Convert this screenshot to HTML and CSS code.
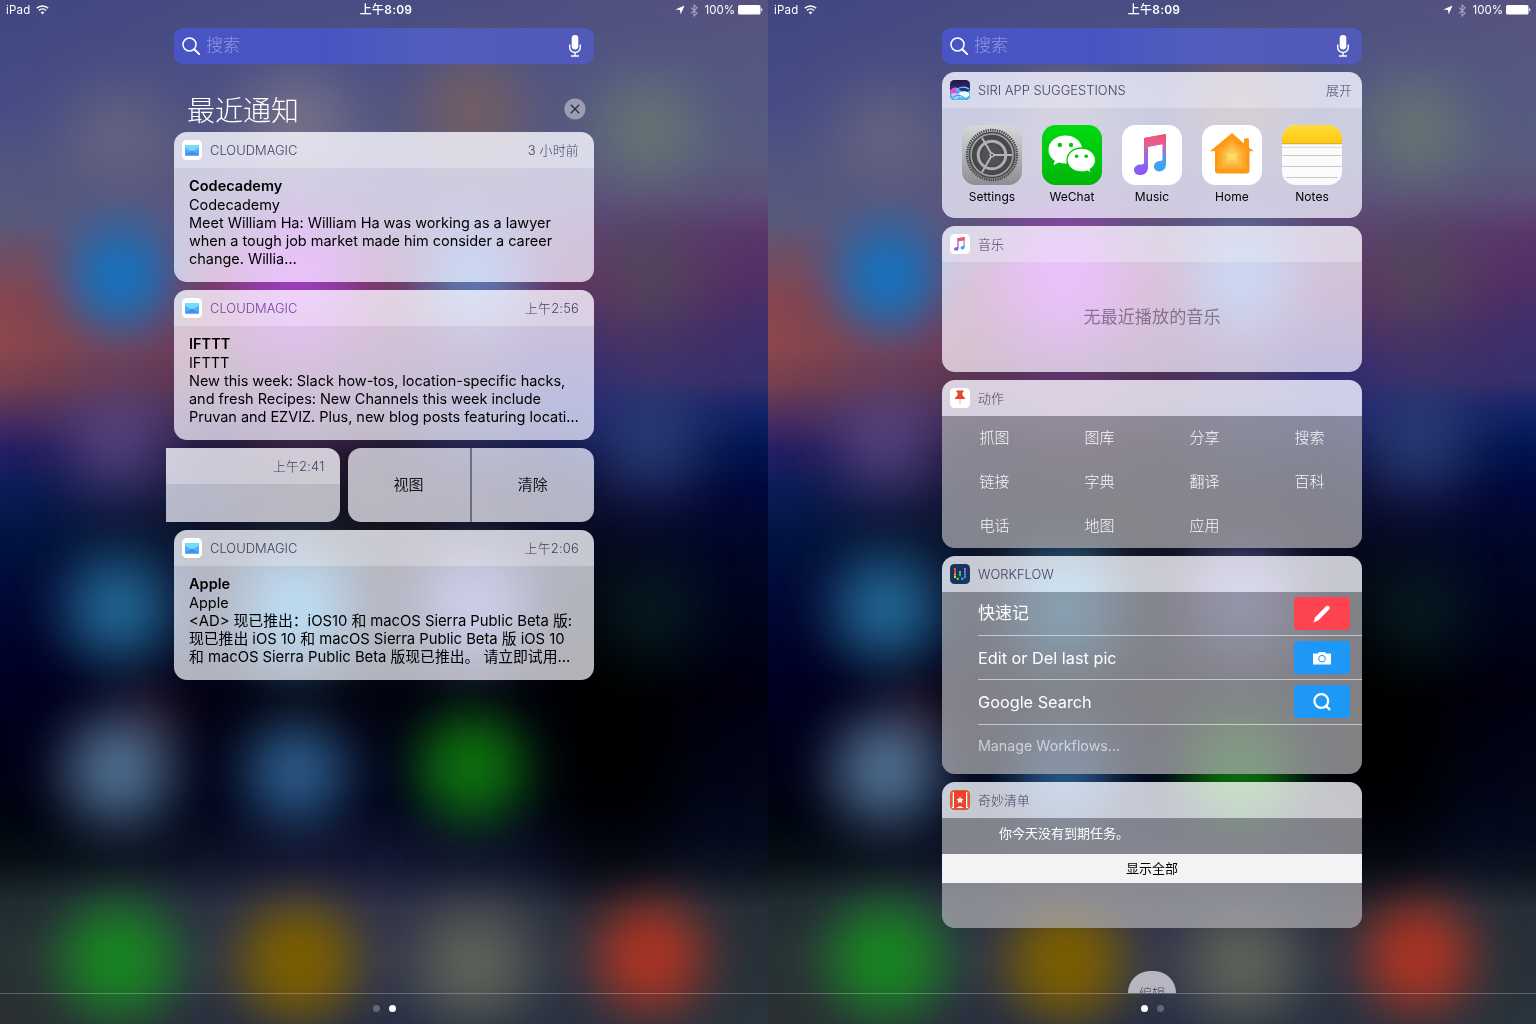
FILE: index.html
```html
<!DOCTYPE html>
<html lang="zh-CN">
<head>
<meta charset="utf-8">
<title>通知与小组件</title>
<link rel="stylesheet" href="styles.css">
</head>
<body>
<svg class="defs" width="0" height="0">
  <defs>
    <linearGradient id="g-mail" x1="0" y1="0" x2="0" y2="1"><stop offset="0" stop-color="#5fd0fa"/><stop offset="1" stop-color="#4a97f2"/></linearGradient>
    <linearGradient id="g-note" x1="0" y1="0" x2="0" y2="1"><stop offset="0" stop-color="#fb4f6c"/><stop offset=".3" stop-color="#e0609a"/><stop offset=".62" stop-color="#8a6cf5"/><stop offset="1" stop-color="#8a55f7"/></linearGradient>
    <linearGradient id="g-note2" x1="0" y1="0" x2="0" y2="1"><stop offset="0" stop-color="#fb4f6c"/><stop offset=".3" stop-color="#e0609a"/><stop offset=".65" stop-color="#4f98f0"/><stop offset="1" stop-color="#35aaf8"/></linearGradient>
    <linearGradient id="g-set" x1="0" y1="0" x2="0" y2="1"><stop offset="0" stop-color="#d6d7d8"/><stop offset="1" stop-color="#8d8e92"/></linearGradient>
    <linearGradient id="g-wc" x1="0" y1="0" x2="0" y2="1"><stop offset="0" stop-color="#00da12"/><stop offset="1" stop-color="#00b50b"/></linearGradient>
    <linearGradient id="g-nt" x1="0" y1="0" x2="0" y2="1"><stop offset="0" stop-color="#ffdb3f"/><stop offset="1" stop-color="#fdc80a"/></linearGradient>
    <linearGradient id="g-siri" x1="0" y1="0" x2="0" y2="1"><stop offset="0" stop-color="#1b1840"/><stop offset=".5" stop-color="#3a2a80"/><stop offset="1" stop-color="#2c70b8"/></linearGradient>
    <symbol id="i-mail" viewBox="0 0 20 20"><rect width="20" height="20" rx="4.500" fill="#fff"/><rect x="3" y="5" width="14" height="10.500" rx=".8" fill="url(#g-mail)"/><path d="M3 5h14v2L10 12 3 7z" fill="#74dcf8"/><path d="M3 15.500l7-5 7 5z" fill="#4a8df0"/></symbol>
    <symbol id="i-note" viewBox="0 0 60 60"><path d="M22 13l22-4v9.500l-18 3.500v20c0 5-3 8-7.500 8-4 0-6.500-2-6.500-5 0-3.500 3-5.500 7-5.500 1.800 0 3-.4 3-2z" fill="url(#g-note)"/><path d="M22 13l22-4v30c0 4.800-3 7.400-6.800 7.400-3.200 0-5.200-2-5.200-4.800 0-3.200 2.600-5.400 6-5.600 1.700-.1 2.500-.6 2.500-2V19L22 22.500z" fill="url(#g-note2)"/></symbol>
    <symbol id="i-search" viewBox="0 0 18 18"><circle cx="7.500" cy="7.500" r="6.500" fill="none" stroke="currentColor" stroke-width="1.500"/><path d="M12.200 12.200l5 4.900" stroke="currentColor" stroke-width="2" stroke-linecap="round"/></symbol>
    <symbol id="i-mic" viewBox="0 0 12 22"><rect x="2.700" y="0" width="6.600" height="14.500" rx="3.300" fill="#fff"/><path d="M.7 9.500v2.700a5.300 5.300 0 0 0 10.600 0V9.500M6 17.500v3M2 21h8" fill="none" stroke="#fff" stroke-width="1.400"/></symbol>
    <symbol id="i-wifi" viewBox="0 0 13 10"><path d="M6.500 9.500L4.600 7.300a2.800 2.800 0 0 1 3.800 0z" fill="#fff"/><path d="M2.900 5.500a5.200 5.200 0 0 1 7.200 0M.8 3.200a8.200 8.200 0 0 1 11.400 0" fill="none" stroke="#fff" stroke-width="1.500"/></symbol>
    <symbol id="i-loc" viewBox="0 0 10 10"><path d="M9.500.5L5.700 9.500 5 5 .5 4.400z" fill="#fff"/></symbol>
    <symbol id="i-bt" viewBox="0 0 8 13"><path d="M1 3.700l6 5.600-3 2.700V1l3 2.700-6 5.600" fill="none" stroke="#a3a4c4" stroke-width="1.100"/></symbol>
    <symbol id="i-bat" viewBox="0 0 25 10"><rect x="0" y="0" width="22.500" height="9.500" rx="1.600" fill="#fff"/><path d="M23.200 3c1.700.6 1.700 3 0 3.600z" fill="#fff"/></symbol>
  </defs>
</svg>

<main class="screens">
  <section class="screen">
    <div class="wallpaper"><div class="glow"></div></div>
    <div class="content">
      <header class="status">
        <div class="status-side"><span>iPad</span><svg class="wifi"><use href="#i-wifi"/></svg></div>
        <div class="clock">上午<b>8:09</b></div>
        <div class="status-side end"><svg class="loc"><use href="#i-loc"/></svg><svg class="bt"><use href="#i-bt"/></svg><span>100%</span><svg class="bat"><use href="#i-bat"/></svg></div>
      </header>
      <div class="column">
        <div class="search"><svg class="glass"><use href="#i-search"/></svg><span>搜索</span><svg class="mic"><use href="#i-mic"/></svg></div>
        <div class="heading"><h1>最近通知</h1><svg class="close" viewBox="0 0 22 22"><circle cx="11" cy="11" r="10.600" fill="#9c9cb2"/><path d="M6.800 6.800l8.400 8.400M15.200 6.800l-8.400 8.400" stroke="#2c2c48" stroke-width="1.300"/></svg></div>

        <article class="card note">
          <div class="card-head"><svg class="app"><use href="#i-mail"/></svg><span class="app-name">CLOUDMAGIC</span><time>3 小时前</time></div>
          <div class="card-body"><strong>Codecademy</strong><p class="sub">Codecademy</p><p>Meet William Ha: William Ha was working as a lawyer<br>when a tough job market made him consider a career<br>change. Willia…</p></div>
        </article>
        <article class="card note">
          <div class="card-head"><svg class="app"><use href="#i-mail"/></svg><span class="app-name plum">CLOUDMAGIC</span><time>上午2:56</time></div>
          <div class="card-body"><strong>IFTTT</strong><p class="sub">IFTTT</p><p>New this week: Slack how-tos, location-specific hacks,<br>and fresh Recipes: New Channels this week include<br>Pruvan and EZVIZ. Plus, new blog posts featuring locati…</p></div>
        </article>
        <div class="swiped">
          <article class="card slid"><div class="card-head"><time>上午2:41</time></div></article>
          <div class="card actions"><button>视图</button><button>清除</button></div>
        </div>
        <article class="card note">
          <div class="card-head"><svg class="app"><use href="#i-mail"/></svg><span class="app-name">CLOUDMAGIC</span><time>上午2:06</time></div>
          <div class="card-body"><strong>Apple</strong><p class="sub">Apple</p><p class="zh">&lt;AD&gt; 现已推出：iOS10 和 macOS Sierra Public Beta 版:<br>现已推出 iOS 10 和 macOS Sierra Public Beta 版 iOS 10<br>和 macOS Sierra Public Beta 版现已推出。 请立即试用…</p></div>
        </article>
      </div>
      <footer class="pager"><i></i><i class="on"></i></footer>
    </div>
  </section>

  <section class="screen">
    <div class="wallpaper"><div class="glow"></div></div>
    <div class="content">
      <header class="status">
        <div class="status-side"><span>iPad</span><svg class="wifi"><use href="#i-wifi"/></svg></div>
        <div class="clock">上午<b>8:09</b></div>
        <div class="status-side end"><svg class="loc"><use href="#i-loc"/></svg><svg class="bt"><use href="#i-bt"/></svg><span>100%</span><svg class="bat"><use href="#i-bat"/></svg></div>
      </header>
      <div class="column">
        <div class="search"><svg class="glass"><use href="#i-search"/></svg><span>搜索</span><svg class="mic"><use href="#i-mic"/></svg></div>

        <article class="card siri">
          <div class="card-head">
            <svg class="app" viewBox="0 0 20 20"><rect width="20" height="20" rx="4.500" fill="url(#g-siri)"/><path d="M0 11c4-5 7-4 10-1s7 3 10 0v5.500a4.500 4.500 0 0 1-4.500 4.500h-11A4.500 4.500 0 0 1 0 15.500z" fill="#49b8ee"/><path d="M0 11c3-4 6-4 8-1l-2 4c-2 1-4 1-6 0z" fill="#e24fd8"/><path d="M6 10c3-3 9-4 13-1" stroke="#5fe6f5" stroke-width="1.200" fill="none"/><ellipse cx="14" cy="14.500" rx="5.500" ry="3.300" fill="#e9fbff"/><path d="M1 14c3-2 6-1 9 2l-3 3H4z" fill="#b9c8fb"/><path d="M3 17.500c4-3 8-3 12 1" stroke="#2f8fe0" stroke-width="1" fill="none"/></svg>
            <span class="app-name">SIRI APP SUGGESTIONS</span><span class="more">展开</span>
          </div>
          <div class="apps">
            <div class="launcher"><svg viewBox="0 0 60 60"><rect width="60" height="60" rx="13.500" fill="url(#g-set)"/><circle cx="30" cy="30" r="25" fill="none" stroke="#48494d" stroke-width="2.500" stroke-dasharray="1.400 .9"/><circle cx="30" cy="30" r="23.500" fill="#48494d"/><circle cx="30" cy="30" r="21" fill="none" stroke="#a2a3a6" stroke-width="1.600"/><circle cx="30" cy="30" r="13.800" fill="none" stroke="#aeafb2" stroke-width="3"/><circle cx="30" cy="30" r="10.500" fill="#505156"/><path d="M30 30h20M30 30L20 12.700M30 30L20 47.300" stroke="#b4b5b8" stroke-width="2"/><circle cx="30" cy="30" r="2.500" fill="#b4b5b8"/><circle cx="30" cy="30" r="1.100" fill="#48494d"/></svg><span>Settings</span></div>
            <div class="launcher"><svg viewBox="0 0 60 60"><rect width="60" height="60" rx="13.500" fill="url(#g-wc)"/><path d="M23.500 10.500C14 10.500 6.500 16.700 6.500 24.700c0 4.500 2.400 8.400 6.300 11l-1.400 4.600 5.400-2.700c2 .6 4.300 1 6.700 1 9.400 0 16.800-6.100 16.800-13.900S33 10.500 23.500 10.500z" fill="#fff"/><circle cx="17.800" cy="20" r="2.200" fill="#04c60f"/><circle cx="29" cy="20" r="2.200" fill="#04c60f"/><path d="M39.500 23c-8.200 0-14.500 5.300-14.500 12s6.300 12 14.500 12c2 0 3.900-.3 5.600-.9l4.400 2.300-1.200-4c3.300-2.200 5.300-5.500 5.300-9.400C53.600 28.300 47.400 23 39.500 23z" fill="#fff" stroke="#04c80f" stroke-width="1.400"/><circle cx="34.600" cy="31.200" r="1.800" fill="#04c00f"/><circle cx="44.200" cy="31.200" r="1.800" fill="#04c00f"/></svg><span>WeChat</span></div>
            <div class="launcher"><svg viewBox="0 0 60 60"><rect width="60" height="60" rx="13.500" fill="#fff"/><use href="#i-note"/></svg><span>Music</span></div>
            <div class="launcher"><svg viewBox="0 0 60 60"><rect width="60" height="60" rx="13.500" fill="#fff"/><path d="M30 8L42 18.500V14c0-1 5-1 5 0v8.500l5 3.800h-4.500V46c0 1.500-1 2.500-2.500 2.500H15.500c-1.500 0-2.500-1-2.500-2.500V26.300H8z" fill="#fd9913"/><path d="M30 14L43.500 25v19.500h-27V25z" fill="#fda72a"/><path d="M30 18l10 8.500v15H20v-15z" fill="#fdb63c"/><path d="M30 22.500l6.800 5v11H23.200v-11z" fill="#fec850"/><path d="M26 28h8v7.500h-8z" fill="#ffdc66"/></svg><span>Home</span></div>
            <div class="launcher"><svg viewBox="0 0 60 60"><rect width="60" height="60" rx="13.500" fill="#fbfbfb"/><path d="M0 18.500v-5A13.500 13.500 0 0 1 13.500 0h33A13.500 13.500 0 0 1 60 13.500v5z" fill="url(#g-nt)"/><path d="M0 18.700h60" stroke="#bd9526" stroke-width=".8"/><path d="M0 22.300h60" stroke="#b5b5b8" stroke-width=".8" stroke-dasharray="1 .6"/><path d="M0 30.500h60M0 41.500h60M4 52.500h52" stroke="#c4c4c6" stroke-width=".9"/></svg><span>Notes</span></div>
          </div>
        </article>

        <article class="card music">
          <div class="card-head"><svg class="app" viewBox="0 0 60 60"><rect width="60" height="60" rx="13" fill="#fff"/><use href="#i-note"/></svg><span class="app-name han">音乐</span></div>
          <p class="empty">无最近播放的音乐</p>
        </article>

        <article class="card dark pins">
          <div class="card-head"><svg class="app" viewBox="0 0 20 20"><rect width="20" height="20" rx="4.500" fill="#fff"/><path d="M10 11v5" stroke="#b9c0c8" stroke-width="1"/><path d="M6.500 2.500h7v1.800h-1v3.500c1.500.8 2.500 1.700 2.500 3.200H5c0-1.500 1-2.400 2.500-3.200V4.300h-1z" fill="#e8432f"/></svg><span class="app-name han">动作</span></div>
          <div class="grid"><span>抓图</span><span>图库</span><span>分享</span><span>搜索</span><span>链接</span><span>字典</span><span>翻译</span><span>百科</span><span>电话</span><span>地图</span><span>应用</span></div>
        </article>

        <article class="card dark flows">
          <div class="card-head"><svg class="app" viewBox="0 0 20 20"><rect width="20" height="20" rx="4.500" fill="#15365f"/><g fill="none" stroke-width="1.900" stroke-dasharray="2.200 .4"><path d="M5 4v5.200" stroke="#f4574a"/><path d="M5 9.200v2.600" stroke="#f5a623"/><path d="M5 11.800v2.500" stroke="#d9e03c"/><path d="M6.600 14.700h2.200" stroke="#8fdc3c"/><path d="M10 7v5.500" stroke="#4cd964"/><path d="M11.300 14.700h2.200" stroke="#33c6e8"/><path d="M15 4v5.200" stroke="#d55bd0"/><path d="M15 9.200v5" stroke="#5a88f0"/></g></svg><span class="app-name">WORKFLOW</span></div>
          <ul class="list">
            <li><span class="big">快速记</span><em class="red"><svg viewBox="0 0 20 20"><path d="M1.500 18.500l1.700-5.300L13.800 2.500c1-1 2.300-1 3.200-.2s.9 2.200 0 3.200L6.600 16.300z" fill="#fff"/></svg></em></li>
            <li><span>Edit or Del last pic</span><em><svg viewBox="0 0 20 20"><path d="M1 5.500h4.600L7.300 3.900h5.400l1.700 1.600H19v11H1z" fill="#fff"/><circle cx="10" cy="10.700" r="3.300" fill="none" stroke="#1f97f5" stroke-width="1"/></svg></em></li>
            <li><span>Google Search</span><em><svg viewBox="0 0 20 20"><circle cx="9.300" cy="9" r="6.900" fill="none" stroke="#fff" stroke-width="2.200"/><path d="M14.200 14l3.800 3.900" stroke="#fff" stroke-width="2.400"/></svg></em></li>
            <li class="manage"><span>Manage Workflows...</span></li>
          </ul>
        </article>

        <article class="card dark tasks">
          <div class="card-head"><svg class="app" viewBox="0 0 20 20"><rect width="20" height="20" rx="4.500" fill="#e2582c"/><path d="M2 2h16v16H2z" fill="#fff"/><path d="M4 1h12v18l-6-3-6 3z" fill="#f0402f"/><path d="M2.300 2v15M17.700 2v15" stroke="#c8793c" stroke-width="1"/><path d="M10 6.500l1.100 2.300 2.500.3-1.800 1.700.5 2.500-2.300-1.200-2.300 1.200.5-2.500-1.800-1.700 2.500-.3z" fill="#fff"/></svg><span class="app-name han">奇妙清单</span></div>
          <p class="due">你今天没有到期任务。</p>
          <div class="all">显示全部</div>
          <div class="rest"></div>
        </article>
        <div class="edit">编辑</div>
      </div>
      <footer class="pager"><i class="on"></i><i></i></footer>
    </div>
  </section>
</main>
</body>
</html>
```

FILE: styles.css
```css
* { box-sizing: border-box; }
body { margin: 0; background: #000; font-family: Inter, "Noto Sans CJK SC", sans-serif; color: #000; }
h1, p, ul { margin: 0; padding: 0; }
.defs { position: absolute; }
svg { display: block; flex: none; }

.screens { display: flex; width: 1536px; height: 1024px; overflow: hidden; }
.screen { display: grid; width: 768px; height: 1024px; overflow: hidden; }
.wallpaper, .content { grid-area: 1 / 1; min-width: 0; min-height: 0; }

/* Blurred home screen: three vertical washes blended sideways, icon glows on top */
.wallpaper { display: grid; height: 1024px; overflow: hidden; background: linear-gradient(#484d83 0, #4e5285 70px, #56587f 140px, #62507a 230px, #73375f 285px, #5c355e 350px, #3d2c50 410px, #1d1429 455px, #14131f 525px, #060a1a 640px, #03040f 700px, #02051d 800px, #141731 860px, #303349 910px, #34384c 960px, #292f45 1024px); }
.wallpaper::before, .wallpaper::after { content: ""; grid-area: 1 / 1; }
.wallpaper::before { background: linear-gradient(#40467f 0, #474d84 110px, #525680 170px, #585a7c 220px, #6c5068 250px, #85474f 300px, #8c484b 345px, #75404f 385px, #4a2e62 420px, #251f66 450px, #0a1c58 490px, #001442 540px, #000a38 590px, #000024 680px, #000018 760px, #00050f 820px, #061014 860px, #1f2a30 900px, #273334 950px, #2b2f31 1024px); -webkit-mask: linear-gradient(90deg, #000 0, transparent 290px); mask: linear-gradient(90deg, #000 0, transparent 290px); }
.wallpaper::after { background: linear-gradient(#57527f 0, #555982 80px, #585c7e 160px, #5b5078 195px, #58366a 235px, #503066 280px, #3e2e6a 330px, #35306c 380px, #12226a 412px, #001552 450px, #00083c 490px, #000628 550px, #00051c 610px, #00000f 690px, #040a1c 840px, #0c1420 870px, #262e36 910px, #2a343b 1024px); -webkit-mask: linear-gradient(270deg, #000 0, transparent 380px); mask: linear-gradient(270deg, #000 0, transparent 380px); }
.glow { grid-area: 1 / 1; z-index: 1; height: 1100px; filter: blur(19px); background:
  radial-gradient(circle at 118px 135px, rgba(115,108,128,.75), transparent 74px),
  radial-gradient(circle at 296px 128px, rgba(130,122,140,.8) 10px, transparent 80px),
  radial-gradient(circle at 472px 108px, rgba(124,96,90,.9) 6px, transparent 78px),
  radial-gradient(circle at 648px 128px, rgba(108,128,108,.85), transparent 78px),
  radial-gradient(circle at 120px 277px, rgb(20,114,190) 26px, transparent 76px),
  radial-gradient(circle at 296px 280px, rgb(155,62,190) 24px, transparent 92px),
  radial-gradient(circle at 474px 278px, rgba(90,130,185,.95) 16px, transparent 80px),
  radial-gradient(circle at 648px 275px, rgba(78,78,84,.8), transparent 76px),
  radial-gradient(circle at 118px 440px, rgba(98,76,138,.85) 4px, transparent 78px),
  radial-gradient(circle at 300px 400px, rgba(110,60,120,.6), transparent 80px),
  radial-gradient(circle at 472px 420px, rgba(56,70,130,.5), transparent 80px),
  radial-gradient(circle at 560px 390px, rgba(30,40,130,.7), transparent 80px),
  radial-gradient(circle at 650px 442px, rgba(48,70,130,.9), transparent 80px),
  radial-gradient(circle at 118px 608px, rgb(36,110,156) 12px, transparent 80px),
  radial-gradient(circle at 296px 608px, rgb(60,142,188) 16px, transparent 82px),
  radial-gradient(circle at 474px 604px, rgb(100,98,160) 14px, transparent 80px),
  radial-gradient(circle at 648px 612px, rgba(8,36,40,.8), transparent 76px),
  radial-gradient(circle at 118px 770px, rgb(84,118,152) 14px, transparent 82px),
  radial-gradient(circle at 150px 718px, rgba(72,34,48,.65), transparent 50px),
  radial-gradient(circle at 296px 772px, rgb(46,96,144) 14px, transparent 76px),
  radial-gradient(circle at 472px 768px, rgb(14,112,14) 26px, transparent 76px),
  radial-gradient(circle at 118px 960px, rgb(24,134,34) 26px, transparent 82px),
  radial-gradient(circle at 298px 962px, rgb(124,94,0) 30px, transparent 80px),
  radial-gradient(circle at 474px 964px, rgb(98,102,90) 14px, transparent 84px),
  radial-gradient(circle at 650px 957px, rgb(174,52,34) 24px, transparent 78px),
  radial-gradient(ellipse 110px 210px at 610px 730px, rgba(0,0,0,.95) 30%, transparent); }

.content { z-index: 2; display: flex; flex-direction: column; height: 1024px; }
.status { display: grid; grid-template-columns: 1fr auto 1fr; align-items: center; flex: none; height: 20px; padding: 0 6px; font-size: 11.500px; color: #fff; letter-spacing: .2px; }
.status-side { display: flex; align-items: center; gap: 6px; }
.status-side.end { justify-content: flex-end; gap: 5px; letter-spacing: 0; margin-right: -1px; }
.clock { font-size: 12px; font-weight: 500; padding-left: 4px; line-height: 18px; }
.clock b { font-weight: 600; }
.wifi { width: 13px; height: 10px; }
.loc { width: 10px; height: 10px; }
.bt { width: 8px; height: 13px; margin-right: 2px; }
.bat { width: 25px; height: 10px; margin-left: -2px; }

.column { display: flex; flex-direction: column; gap: 8px; width: 420px; height: 973px; margin: 0 auto; padding-top: 8px; flex: none; }
.search { display: flex; align-items: center; flex: none; height: 36px; padding: 0 13px 0 8px; border-radius: 9px; background: linear-gradient(90deg, #4a55c5, #4853c4 35%, #505cbc 55%, #525ab8); color: #9297e0; font-size: 17px; font-weight: 300; gap: 6px; }
.search span { line-height: 24px; margin-top: -2px; }
.glass { width: 18px; height: 18px; color: #fff; }
.mic { width: 12px; height: 22px; margin-left: auto; }

.heading { display: flex; align-items: center; justify-content: space-between; height: 52px; padding: 0 8px 0 13px; flex: none; }
.heading h1 { color: #fff; font-size: 28px; font-weight: 300; line-height: 40px; padding-top: 25px; }
.close { width: 22px; height: 22px; margin-top: 22px; }

.card { flex: none; overflow: hidden; border-radius: 13px; background: rgba(249,250,255,.715); -webkit-backdrop-filter: saturate(1.350) brightness(1.080); backdrop-filter: saturate(1.350) brightness(1.080); }
.card-head { display: flex; align-items: center; height: 36px; padding: 0 15px 0 8px; gap: 8px; background: rgba(255,255,255,.26); color: rgba(34,32,70,.82); font-size: 12.950px; font-weight: 300; }
.app { width: 20px; height: 20px; }
.app-name.plum { color: #79429a; }
.app-name.han, .more, .card-head time { line-height: 20px; margin-top: -1px; }
.card-head time { margin-left: auto; letter-spacing: .2px; }
.more { margin-left: auto; margin-right: -5px; }

.note { height: 150px; }
.note .card-body { padding: 8px 15px 0; font-size: 14.500px; line-height: 18px; letter-spacing: -.035px; white-space: nowrap; }
.note strong { display: block; font-weight: 600; line-height: 19px; margin-bottom: 1px; letter-spacing: .03px; }
.note .zh { font-size: 14.850px; letter-spacing: -.04px; }

.swiped { display: grid; grid-template-columns: 173.500px 246.500px; gap: 8px; height: 74px; margin-left: -8px; flex: none; width: 428px; }
.slid { border-radius: 0 13px 13px 0; }
.actions { display: flex; }
.actions button { flex: 1; border: 0; padding: 0 0 2px; background: none; font: 400 15px/1 Inter, "Noto Sans CJK SC", sans-serif; color: #16161c; }
.actions button + button { border-left: 2px solid rgba(85,85,105,.75); }

.siri, .music { height: 146px; }
.apps { display: flex; justify-content: space-between; padding: 17px 20px 0; }
.launcher { display: flex; flex-direction: column; align-items: center; width: 60px; font-size: 12px; line-height: 16px; gap: 4px; letter-spacing: .06px; }
.launcher svg { width: 60px; height: 60px; }
.empty { padding-top: 43px; text-align: center; font-size: 17.150px; line-height: 24px; color: rgba(60,50,80,.55); }

.dark { display: flex; flex-direction: column; color: #fff; }
.dark .card-head { flex: none; }
.grid, .list, .due, .rest { background: rgba(0,0,0,.275); }
.pins { height: 168px; }
.grid { display: grid; grid-template-columns: repeat(4, 105px); grid-auto-rows: 44px; font-size: 15px; font-weight: 300; line-height: 44px; text-align: center; color: rgba(255,255,255,.95); }
.flows { height: 218px; }
.list { flex: 1; list-style: none; padding-left: 36px; font-size: 16.300px; }
.list .big { font-size: 17px; line-height: 24px; margin-top: -1px; }
.list li { display: flex; align-items: center; justify-content: space-between; height: 44px; padding-right: 12px; border-bottom: 1px solid rgba(255,255,255,.55); }
.list li:nth-child(3) { height: 45px; padding-bottom: 1px; }
.list li.manage { border: 0; height: 41px; font-size: 14.250px; color: rgba(255,255,255,.6); }
.list em { display: flex; align-items: center; justify-content: center; width: 56px; height: 33px; border-radius: 4px; background: #1e98f6; }
.list em.red { background: #fd434f; }
.list em svg { width: 20px; height: 20px; }
.tasks { height: 146px; }
.due { height: 36px; flex: none; padding-left: 57px; font-size: 13px; line-height: 31px; }
.all { height: 29px; flex: none; background: #f3f3f5; color: #000; text-align: center; font-size: 13px; line-height: 28px; }
.rest { flex: 1; }
.edit { flex: none; align-self: center; width: 48px; height: 22px; margin-top: 35px; overflow: hidden; border-radius: 24px 24px 0 0; background: rgba(205,205,215,.85); color: #3c3c46; font-size: 13px; font-weight: 300; line-height: 45px; text-align: center; }

.pager { display: flex; flex: none; justify-content: center; align-items: center; gap: 9px; height: 31px; padding-bottom: 1px; border-top: 1px solid rgba(255,255,255,.25); }
.pager i { width: 7px; height: 7px; border-radius: 50%; background: rgba(255,255,255,.25); }
.pager .on { background: #fff; }
```
